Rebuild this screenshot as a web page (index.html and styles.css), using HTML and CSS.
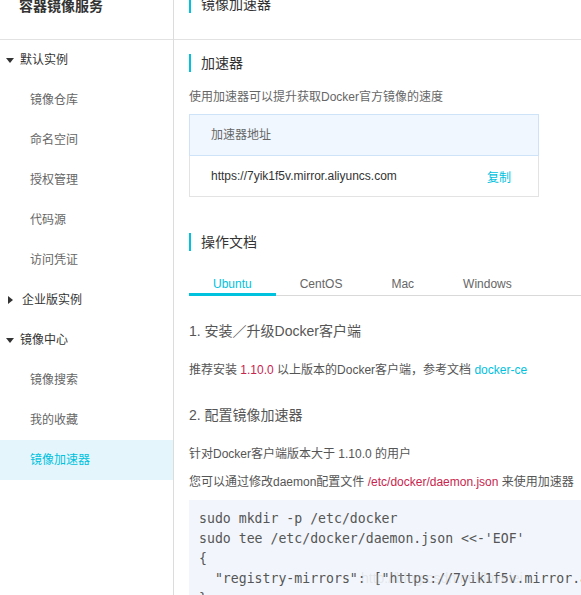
FILE: index.html
```html
<!DOCTYPE html>
<html lang="zh-CN">
<head>
<meta charset="utf-8">
<title>镜像加速器</title>
<link rel="stylesheet" href="styles.css">
</head>
<body>
<div class="app">
  <aside class="sidebar">
    <div class="side-head"><span class="side-title">容器镜像服务</span></div>
    <ul class="nav">
      <li class="group"><span class="tri tri-down"></span>默认实例</li>
      <li class="item">镜像仓库</li>
      <li class="item">命名空间</li>
      <li class="item">授权管理</li>
      <li class="item">代码源</li>
      <li class="item">访问凭证</li>
      <li class="group"><span class="tri tri-right"></span>企业版实例</li>
      <li class="group"><span class="tri tri-down"></span>镜像中心</li>
      <li class="item">镜像搜索</li>
      <li class="item">我的收藏</li>
      <li class="item active">镜像加速器</li>
    </ul>
  </aside>
  <main class="main">
    <div class="main-head"><span class="page-title">镜像加速器</span></div>
    <div class="content">
      <h2 class="sec-title">加速器</h2>
      <p class="desc">使用加速器可以提升获取Docker官方镜像的速度</p>
      <div class="table">
        <div class="thead">加速器地址</div>
        <div class="trow"><span class="url">https://7yik1f5v.mirror.aliyuncs.com</span><a class="link">复制</a></div>
      </div>
      <h2 class="sec-title sec-docs">操作文档</h2>
      <div class="tabs">
        <span class="tab active">Ubuntu</span>
        <span class="tab">CentOS</span>
        <span class="tab">Mac</span>
        <span class="tab">Windows</span>
      </div>
      <h3 class="step step-1">1. 安装／升级Docker客户端</h3>
      <p class="text t-1">推荐安装 <span class="red">1.10.0</span> 以上版本的Docker客户端，参考文档 <a class="link">docker-ce</a></p>
      <h3 class="step step-2">2. 配置镜像加速器</h3>
      <p class="text t-2">针对Docker客户端版本大于 1.10.0 的用户</p>
      <p class="text t-3">您可以通过修改daemon配置文件 <span class="red">/etc/docker/daemon.json</span> 来使用加速器</p>
      <div class="code-wrap">
<pre class="code">sudo mkdir -p /etc/docker
sudo tee /etc/docker/daemon.json &lt;&lt;-'EOF'
{
  "registry-mirrors": ["https://7yik1f5v.mirror.aliyuncs.com"]
}
EOF
sudo systemctl daemon-reload
sudo systemctl restart docker</pre>
        <span class="watermark">http://blog.csdn.net/lovelei</span>
      </div>
    </div>
  </main>
</div>
</body>
</html>
```
FILE: styles.css
```css
* { box-sizing: border-box; }
html, body { margin: 0; padding: 0; }
body {
  font-family: "Liberation Sans", "Noto Sans CJK SC", sans-serif;
  color: #333;
  background: #fff;
  overflow: hidden;
}
.app {
  display: flex;
  height: 595px;
  overflow: hidden;
}
.sidebar {
  width: 174px;
  flex: none;
  border-right: 1px solid #dcdcdc;
}
.side-head {
  display: flow-root;
  height: 40px;
  border-bottom: 1px solid #e2e2e2;
  padding-left: 19px;
}
.side-title {
  display: block;
  margin-top: -3px;
  font-size: 14px;
  line-height: 18px;
  font-weight: bold;
  color: #333;
}
.nav {
  list-style: none;
  margin: 0;
  padding: 0;
}
.nav li {
  height: 40px;
  line-height: 38px;
  font-size: 12px;
  display: flex;
  align-items: center;
}
.group {
  color: #333;
  padding-left: 6px;
}
.item {
  color: #666;
  padding-left: 30px;
}
.item.active {
  background: #e4f6fb;
  color: #00c1de;
}
.tri {
  width: 0;
  height: 0;
  margin-right: 6px;
}
.tri-down {
  border-left: 4.5px solid transparent;
  border-right: 4.5px solid transparent;
  border-top: 5px solid #333;
}
.tri-right {
  margin-left: 2px;
  margin-right: 9px;
  border-top: 4.5px solid transparent;
  border-bottom: 4.5px solid transparent;
  border-left: 5px solid #333;
}
.main {
  flex: 1;
  min-width: 0;
}
.main-head {
  display: flow-root;
  height: 40px;
  border-bottom: 1px solid #e2e2e2;
  padding-left: 15px;
}
.page-title {
  display: block;
  margin-top: -5px;
  border-left: 2px solid #00c1de;
  padding-left: 10px;
  font-size: 14px;
  line-height: 18px;
  color: #333;
}
.content {
  padding-left: 15px;
}
.sec-title {
  margin: 14px 0 0;
  border-left: 2px solid #00c1de;
  padding-left: 10px;
  font-size: 14px;
  line-height: 18px;
  font-weight: normal;
  color: #333;
}
.desc {
  margin: 16px 0 0;
  font-size: 12px;
  line-height: 18px;
  color: #666;
}
.table {
  margin-top: 8px;
  width: 350px;
  border: 1px solid #e3e3e3;
}
.thead {
  height: 42px;
  margin: -1px -1px 0;
  background: #f0f7ff;
  border: 1px solid #cfe3f8;
  padding-left: 21px;
  line-height: 40px;
  font-size: 12px;
  color: #666;
}
.trow {
  height: 40px;
  display: flex;
  align-items: center;
  justify-content: space-between;
  padding: 0 27px 0 21px;
  font-size: 12px;
  color: #333;
}
.link { color: #00c1de; text-decoration: none; }
.sec-docs { margin-top: 36px; }
.tabs {
  margin-top: 24px;
  display: flex;
  border-bottom: 1px solid #d9d9d9;
}
.tab {
  padding: 0 24px;
  line-height: 18px;
  font-size: 12px;
  color: #666;
  border-bottom: 3px solid transparent;
  margin-bottom: -1px;
}
.tab:nth-child(2) { padding-right: 25px; }
.tab:nth-child(3) { padding-right: 25px; }
.tab.active {
  color: #00c1de;
  border-bottom-color: #00c1de;
}
.step {
  margin: 25px 0 0;
  font-size: 14px;
  line-height: 20px;
  font-weight: normal;
  color: #555;
}
.step-2 { margin-top: 26px; }
.text {
  margin: 20px 0 0;
  font-size: 12px;
  line-height: 18px;
  color: #555;
  white-space: nowrap;
}
.t-3 { margin-top: 10px; }
.red { color: #c7254e; }
.code-wrap {
  position: relative;
  margin-top: 9px;
  width: 600px;
  background: #f2f6fc;
  padding: 9px 10px 10px;
}
.code {
  margin: 0;
  font-family: "DejaVu Sans Mono", monospace;
  font-size: 13.2px;
  line-height: 20px;
  color: #555;
}
.watermark {
  position: absolute;
  left: 172px;
  top: 70px;
  font-size: 14px;
  color: rgba(200, 200, 200, 0.35);
  font-family: "Liberation Sans", sans-serif;
}
```
